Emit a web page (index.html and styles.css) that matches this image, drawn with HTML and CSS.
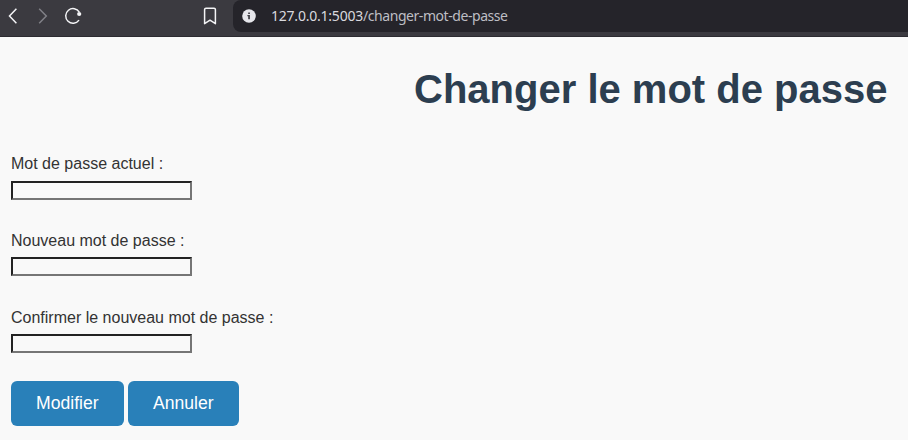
FILE: index.html
```html
<!DOCTYPE html>
<html lang="fr">
<head>
<meta charset="utf-8">
<title>Changer le mot de passe</title>
<link rel="stylesheet" href="styles.css">
</head>
<body>
<header class="toolbar">
  <svg class="nav" width="233" height="32" viewBox="0 0 233 32" fill="none" stroke="#f4f4f6" stroke-width="1.5">
    <path d="M16.4 8.8 9.5 16l6.9 7.2"/>
    <path d="M39.2 8.8 46.3 16l-7.1 7.2" stroke="#818187"/>
    <path d="M79.3 12.2A7.3 7.3 0 1 0 79 20.1"/>
    <circle cx="79.2" cy="14" r="2.1" fill="#f4f4f6" stroke="none"/>
    <path d="M204.6 23.7V9.6q0-1.4 1.4-1.4h8q1.4 0 1.4 1.4v14.1l-5.4-3.5z" stroke-linejoin="round"/>
  </svg>
  <div class="address">
    <svg width="14" height="14" viewBox="0 0 14 14">
      <circle cx="7" cy="7" r="6.8" fill="#e6e6eb"/>
      <path d="M6.2 3.5h1.7v1.4H6.2zM5.4 6h2.5v4.3H6.2V7.2h-.8z" fill="#3d3c43"/>
    </svg>
    <span class="url"><span class="host">127.0.0.1:5003</span>/changer-mot-de-passe</span>
  </div>
</header>
<main>
  <h1>Changer le mot de passe</h1>
  <form>
    <div class="field"><label for="current">Mot de passe actuel :</label><input id="current" type="password"></div>
    <div class="field"><label for="new">Nouveau mot de passe :</label><input id="new" type="password"></div>
    <div class="field"><label for="confirm">Confirmer le nouveau mot de passe :</label><input id="confirm" type="password"></div>
    <div class="actions"><button type="button">Modifier</button><button type="button">Annuler</button></div>
  </form>
</main>
</body>
</html>
```
FILE: styles.css
```css
* { box-sizing: border-box; }
body {
  margin: 0;
  height: 440px;
  overflow: hidden;
  background: #f9f9f9;
  color: #333;
  font: 16px/25.6px "Liberation Sans", Arial, sans-serif;
}
.toolbar {
  display: flex;
  align-items: flex-start;
  height: 37px;
  background: #3b3a40;
  border-bottom: 1px solid #2c2b31;
}
.nav { flex: none; }
.address {
  display: flex;
  flex: 1;
  align-items: center;
  gap: 15px;
  height: 32px;
  padding-left: 9px;
  background: #25242a;
  border-radius: 8px 0 0 8px;
}
.url {
  font: 14px/20px "Noto Sans", sans-serif;
  letter-spacing: -0.44px;
  color: #bebec4;
  white-space: nowrap;
}
.host { color: #d9d9de; letter-spacing: -0.22px; }
main { padding: 20px 20.5px 0 11px; }
h1 {
  margin: 0 0 30px;
  font-size: 40px;
  line-height: 64px;
  text-align: right;
  color: #2c3e50;
}
.field {
  display: flex;
  flex-direction: column;
  align-items: flex-start;
  height: 76.8px;
}
.field input {
  width: 181px;
  height: 19px;
  margin-top: 4px;
  padding: 0;
  border: 2px solid;
  border-color: #222 #767676 #767676 #222;
  background: #f9f9f9;
}
.actions { display: flex; gap: 4.45px; }
button {
  height: 45px;
  padding: 0 25px;
  border: 0;
  border-radius: 6px;
  background: #2980b9;
  color: #fff;
  font: 17.6px/45px "Liberation Sans", Arial, sans-serif;
}
```
